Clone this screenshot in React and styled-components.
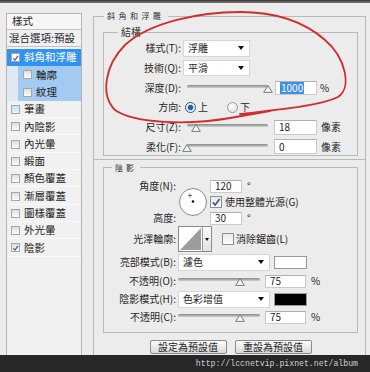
import styled, { createGlobalStyle } from 'styled-components'

const GlobalStyle = createGlobalStyle`
  html, body {
    margin: 0;
    padding: 0;
    background: #ececec;
  }
  body {
    width: 370px;
    height: 372px;
    overflow: hidden;
    font-family: "Noto Sans CJK TC", "Noto Sans", sans-serif;
    color: #1e1e1e;
  }
`

const Page = styled.div`
  position: relative;
  width: 370px;
  height: 372px;
  display: flex;
  flex-direction: column;
  background: #ececec;
  overflow: hidden;
`

const TopEdge = styled.div`
  height: 3px;
  background: linear-gradient(#3a3a3a, #7a7a7a);
`

const Main = styled.div`
  flex: 1;
  display: flex;
  align-items: flex-start;
  gap: 11px;
  padding-left: 6px;
  overflow: hidden;
`

/* ---------- left style list ---------- */

const StyleList = styled.div`
  margin-top: 10px;
  width: 76px;
  height: 346px;
  box-sizing: border-box;
  border: 1px solid #b4b4b4;
  background: #f1f1f1;
  font-size: 10.5px;
  line-height: 1;
`

const ListHeader = styled.div`
  height: 15px;
  display: flex;
  align-items: center;
  padding-left: 5px;
  border-bottom: 1px solid #c2c2c2;
  background: #f6f6f6;
`

const BlendRow = styled.div`
  height: 16px;
  display: flex;
  align-items: center;
  padding-left: 2px;
  border-bottom: 1px solid #c2c2c2;
  margin-bottom: 2px;
`

const ListItem = styled.div`
  height: 17.3px;
  display: flex;
  align-items: center;
  gap: 4px;
  padding-left: ${(p) => (p.$sub ? 16 : 4)}px;
  background: ${(p) =>
    p.$active
      ? '#3193ef'
      : p.$sub
      ? 'linear-gradient(90deg, #dfe9f3 11px, #a3cbf1 11px)'
      : 'transparent'};
  color: ${(p) => (p.$active ? '#fff' : '#222')};
  box-shadow: inset 0 -1px 0 ${(p) => (p.$active || p.$sub ? 'transparent' : '#f9f9f9')};
`

const SmallBox = styled.span`
  flex: none;
  width: 9px;
  height: 9px;
  box-sizing: border-box;
  border: 1px solid #a6a6a6;
  background: ${(p) =>
    p.$tint ? 'linear-gradient(#bfe2f5, #e2f3fc)' : p.$white ? '#fff' : 'linear-gradient(#dedede, #fbfbfb)'};
  display: inline-flex;
  align-items: center;
  justify-content: center;
`

const CheckMark = ({ size = 8 }) => (
  <svg width={size} height={size} viewBox="0 0 10 10">
    <path d="M1.8 5.4 L4.2 8 L8.6 2" fill="none" stroke="#2d55a8" strokeWidth="1.6" />
  </svg>
)

const styleItems = [
  { label: '斜角和浮雕', active: true, checked: true },
  { label: '輪廓', sub: true },
  { label: '紋理', sub: true },
  { label: '筆畫', tint: true },
  { label: '內陰影' },
  { label: '內光暈' },
  { label: '緞面' },
  { label: '顏色覆蓋' },
  { label: '漸層覆蓋' },
  { label: '圖樣覆蓋' },
  { label: '外光暈' },
  { label: '陰影', checked: true },
]

/* ---------- right frames ---------- */

const RightCol = styled.div`
  margin-top: 7px;
  width: 273px;
  display: flex;
  flex-direction: column;
`

const Frame = styled.fieldset`
  margin: 0;
  min-width: 0;
  padding: 4px 7px 3px 9px;
  border: 1px solid #b9b9b9;
`

const LowerFrame = styled.div`
  height: 200px;
  padding: 3px 7px 0 9px;
  border: 1px solid #b9b9b9;
  border-top: none;
`

const Group = styled.fieldset`
  margin: 0;
  min-width: 0;
  padding: ${(p) => p.$pad};
  border: 1px solid #b9b9b9;
`

const Legend = styled.legend`
  padding: 0 3px;
  margin-left: ${(p) => p.$indent}px;
  font-size: ${(p) => p.$size}px;
  line-height: ${(p) => p.$lh}px;
  letter-spacing: ${(p) => p.$spacing || 0}px;
  color: #333;
`

const StructGrid = styled.div`
  display: grid;
  grid-template-columns: 77px 1fr;
  grid-auto-rows: 16px;
  row-gap: 3.8px;
  column-gap: 2px;
  align-items: center;
  font-size: 10px;
`

const ShadeGrid = styled.div`
  display: grid;
  grid-template-columns: 72px 30px 1fr;
  grid-template-rows: 16px 16px 16px 26px 20px 18px 18px 18px;
  column-gap: 2px;
  align-items: center;
  font-size: 10px;
`

const Label = styled.span`
  grid-column: 1;
  grid-row: ${(p) => p.$row || 'auto'};
  text-align: right;
  white-space: nowrap;
  line-height: 1;
`

const Cell = styled.div`
  display: flex;
  align-items: center;
  gap: ${(p) => (p.$gap === undefined ? 4 : p.$gap)}px;
  grid-column: ${(p) => p.$col || 'auto'};
  grid-row: ${(p) => p.$row || 'auto'};
  white-space: nowrap;
  line-height: 1;
`

const Select = styled.div`
  width: ${(p) => p.$w}px;
  height: ${(p) => p.$h || 17}px;
  box-sizing: border-box;
  background: #fff;
  border: 1px solid #d6d6d6;
  display: flex;
  align-items: center;
  justify-content: space-between;
  padding: 0 5px 0 4px;
  &::after {
    content: '';
    border-left: 3.5px solid transparent;
    border-right: 3.5px solid transparent;
    border-top: 4px solid #111;
  }
`

const NumberBox = styled.div`
  width: ${(p) => p.$w}px;
  height: ${(p) => p.$h || 14}px;
  box-sizing: border-box;
  background: #fff;
  border: 1px solid #c9c9c9;
  border-top-color: #b0b0b0;
  display: flex;
  align-items: center;
  padding-left: 4px;
`

const Selected = styled.span`
  background: #3e8fe8;
  color: #fff;
  padding: 1px 1px;
`

const SliderWrap = styled.div`
  position: relative;
  width: ${(p) => p.$w}px;
  height: 12px;
`

const Track = styled.div`
  margin: 3px ${(p) => p.$inset}px 0;
  height: 3px;
  border-radius: 2px;
  background: linear-gradient(#888, #cfcfcf);
`

const Thumb = styled.svg`
  position: absolute;
  top: 3px;
`

const Slider = ({ w, inset = 0, pos }) => {
  const trackW = w - inset * 2
  return (
    <SliderWrap $w={w}>
      <Track $inset={inset} />
      <Thumb width="10" height="8" viewBox="0 0 10 8" style={{ left: inset + pos * trackW - 5 }}>
        <polygon points="5,0.6 9.3,7.4 0.7,7.4" fill="#f4f4f4" stroke="#7a7a7a" strokeWidth="1" />
      </Thumb>
    </SliderWrap>
  )
}

const Radio = styled.span`
  width: 11px;
  height: 11px;
  box-sizing: border-box;
  border-radius: 50%;
  border: 1px solid ${(p) => (p.$on ? '#3c4f66' : '#9a9a9a')};
  background: ${(p) =>
    p.$on
      ? 'radial-gradient(circle, #1f5fb0 0 2.2px, #9cc9f0 2.6px, #f4f8fb 4px)'
      : 'radial-gradient(circle at 40% 35%, #fff, #dcdcdc)'};
`

const BigCheck = styled.span`
  flex: none;
  width: 12px;
  height: 12px;
  box-sizing: border-box;
  border: 1px solid #8e8e8e;
  background: linear-gradient(#e9e9e9, #fdfdfd);
  display: inline-flex;
  align-items: center;
  justify-content: center;
`

const Swatch = styled.div`
  width: 33px;
  height: 13px;
  box-sizing: border-box;
  border: 1px solid #9a9a9a;
  background: ${(p) => p.$color};
`

const ContourBox = styled.div`
  display: flex;
  height: 26px;
  box-sizing: border-box;
  border: 1px solid #8a8a8a;
  background: #fff;
`

const ContourArrow = styled.div`
  width: 8px;
  border-left: 1px solid #9a9a9a;
  background: linear-gradient(#fafafa, #e2e2e2);
  display: flex;
  align-items: center;
  justify-content: center;
  &::after {
    content: '';
    border-left: 2.5px solid transparent;
    border-right: 2.5px solid transparent;
    border-top: 3px solid #111;
  }
`

const Wheel = styled.svg`
  grid-column: 2;
  grid-row: 1 / 4;
  justify-self: center;
`

const ButtonRow = styled.div`
  margin-top: 6.5px;
  display: flex;
  justify-content: center;
  gap: 8px;
`

const Button = styled.div`
  width: 77px;
  height: 14px;
  box-sizing: border-box;
  border: 1px solid #8a8a8a;
  border-radius: 2px;
  background: linear-gradient(#fdfdfd, #d9d9d9);
  font-size: 10px;
  line-height: 12px;
  text-align: center;
`

const Footer = styled.div`
  height: 17px;
  background: #272727;
  display: flex;
  align-items: center;
  justify-content: flex-end;
  padding-right: 12px;
  font-family: "Liberation Mono", monospace;
  font-size: 8.2px;
  color: #cfcfcf;
`

const Annotation = styled.svg`
  position: absolute;
  left: 0;
  top: 0;
  pointer-events: none;
`

export default function App() {
  return (
    <>
      <GlobalStyle />
      <Page>
        <TopEdge />
        <Main>
          <StyleList>
            <ListHeader>樣式</ListHeader>
            <BlendRow>混合選項:預設</BlendRow>
            {styleItems.map((it) => (
              <ListItem key={it.label} $active={it.active} $sub={it.sub}>
                <SmallBox $tint={it.tint} $white={it.active}>
                  {it.checked && <CheckMark />}
                </SmallBox>
                {it.label}
              </ListItem>
            ))}
          </StyleList>

          <RightCol>
            <Frame>
              <Legend $indent={1} $size={8} $lh={12} $spacing={3.5}>斜角和浮雕</Legend>
              <Group $pad="2px 0 0">
                <Legend $indent={14} $size={10} $lh={12}>結構</Legend>
                <StructGrid>
                  <Label>樣式(T):</Label>
                  <Cell>
                    <Select $w={67}>浮雕</Select>
                  </Cell>
                  <Label>技術(Q):</Label>
                  <Cell>
                    <Select $w={67} $h={16}>平滑</Select>
                  </Cell>
                  <Label>深度(D):</Label>
                  <Cell $gap={3}>
                    <Slider w={89} inset={4} pos={1} />
                    <NumberBox $w={42}>
                      <Selected>1000</Selected>
                    </NumberBox>
                    <span>%</span>
                  </Cell>
                  <Label>方向:</Label>
                  <Cell $gap={2}>
                    <Radio $on style={{ marginLeft: 2 }} />
                    <span>上</span>
                    <Radio style={{ marginLeft: 17 }} />
                    <span>下</span>
                  </Cell>
                  <Label>尺寸(Z):</Label>
                  <Cell $gap={2}>
                    <Slider w={89} inset={4} pos={0.11} />
                    <NumberBox $w={43} $h={15}>18</NumberBox>
                    <span style={{ marginLeft: 2 }}>像素</span>
                  </Cell>
                  <Label>柔化(F):</Label>
                  <Cell $gap={2}>
                    <Slider w={89} inset={4} pos={0} />
                    <NumberBox $w={43} $h={15}>0</NumberBox>
                    <span style={{ marginLeft: 2 }}>像素</span>
                  </Cell>
                </StructGrid>
              </Group>
            </Frame>

            <LowerFrame>
              <Group $pad="5.5px 0 6px">
                <Legend $indent={8} $size={8} $lh={10} $spacing={3}>陰影</Legend>
                <ShadeGrid>
                  <Label $row={1}>角度(N):</Label>
                  <Wheel width="30" height="30" viewBox="0 0 30 30">
                    <circle cx="15" cy="15" r="13.5" fill="#fff" stroke="#8a8a8a" strokeWidth="1" />
                    <path d="M12 6.5 V10.5 M10 8.5 H14" stroke="#555" strokeWidth="0.8" />
                    <circle cx="15" cy="14.5" r="1.3" fill="#111" />
                  </Wheel>
                  <Cell $col={3} $row={1} $gap={5}>
                    <NumberBox $w={32} $h={13}>120</NumberBox>
                    <span>°</span>
                  </Cell>
                  <Cell $col={3} $row={2} $gap={3}>
                    <BigCheck>
                      <CheckMark size={10} />
                    </BigCheck>
                    <span>使用整體光源(G)</span>
                  </Cell>
                  <Label $row={3}>高度:</Label>
                  <Cell $col={3} $row={3} $gap={5}>
                    <NumberBox $w={32} $h={13}>30</NumberBox>
                    <span>°</span>
                  </Cell>

                  <Label $row={4}>光澤輪廓:</Label>
                  <Cell $col="2 / 4" $row={4} $gap={2}>
                    <ContourBox>
                      <svg width="23" height="24" viewBox="0 0 23 24">
                        <polygon points="1,23 22,1 22,23" fill="#9d9d9d" />
                      </svg>
                      <ContourArrow />
                    </ContourBox>
                    <BigCheck style={{ marginLeft: 8 }} />
                    <span>消除鋸齒(L)</span>
                  </Cell>

                  <Label $row={5}>亮部模式(B):</Label>
                  <Cell $col="2 / 4" $row={5}>
                    <Select $w={92}>濾色</Select>
                    <Swatch $color="#fff" />
                  </Cell>
                  <Label $row={6}>不透明(O):</Label>
                  <Cell $col="2 / 4" $row={6} $gap={5}>
                    <Slider w={82} pos={0.75} />
                    <NumberBox $w={41} $h={13}>75</NumberBox>
                    <span>%</span>
                  </Cell>
                  <Label $row={7}>陰影模式(H):</Label>
                  <Cell $col="2 / 4" $row={7}>
                    <Select $w={92}>色彩增值</Select>
                    <Swatch $color="#000" />
                  </Cell>
                  <Label $row={8}>不透明(C):</Label>
                  <Cell $col="2 / 4" $row={8} $gap={5}>
                    <Slider w={82} pos={0.75} />
                    <NumberBox $w={41} $h={13}>75</NumberBox>
                    <span>%</span>
                  </Cell>
                </ShadeGrid>
              </Group>
              <ButtonRow>
                <Button>設定為預設值</Button>
                <Button>重設為預設值</Button>
              </ButtonRow>
            </LowerFrame>
          </RightCol>
        </Main>
        <Footer>http://lccnetvip.pixnet.net/album</Footer>

        <Annotation width="370" height="372" viewBox="0 0 370 372">
          <path
            d="M240 114 C275 110 320 106 338 97 C352 88 346 58 325 40 C300 18 270 12 240 12 C200 12 150 22 125 45 C105 65 100 95 115 110 C135 124 190 125 230 118 L270 111"
            fill="none"
            stroke="#d22c2c"
            strokeWidth="1.8"
            strokeLinecap="round"
          />
        </Annotation>
      </Page>
    </>
  )
}
